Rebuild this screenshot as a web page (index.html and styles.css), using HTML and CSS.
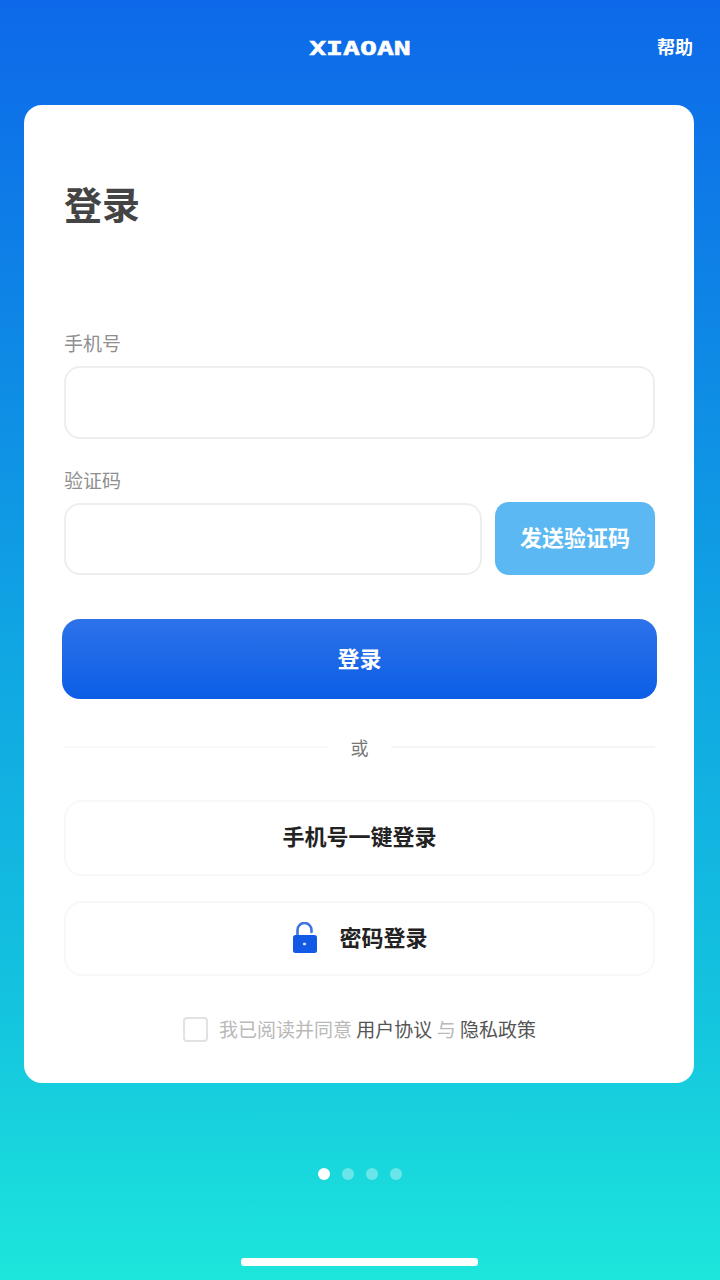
FILE: index.html
```html
<!DOCTYPE html>
<html lang="zh-CN">
<head>
<meta charset="utf-8">
<title>XIAOAN 登录</title>
<link rel="stylesheet" href="styles.css">
</head>
<body>
<div class="page">
  <header class="topbar">
    <span></span>
    <span class="logo">XIAOAN</span>
    <span class="help">帮助</span>
  </header>
  <main class="card">
    <h1 class="title">登录</h1>
    <div class="field">
      <label class="label">手机号</label>
      <div class="input"></div>
    </div>
    <div class="field field-code">
      <label class="label">验证码</label>
      <div class="code-row">
        <div class="input input-code"></div>
        <div class="send">发送验证码</div>
      </div>
    </div>
    <div class="submit">登录</div>
    <div class="divider"><span class="line line-left"></span><span class="or">或</span><span class="line"></span></div>
    <div class="alt">手机号一键登录</div>
    <div class="alt alt-pass">
      <svg class="lock" width="26" height="32" viewBox="0 0 26 32" aria-hidden="true">
        <path d="M5.5 15V8a7 7 0 0 1 14 0V10" fill="none" stroke="#3f74e2" stroke-width="2.6" stroke-linecap="round"/>
        <rect x="1" y="13" width="24" height="18" rx="2.5" fill="#1259e6"/>
        <rect x="10.8" y="20.7" width="3.4" height="2.6" rx="1.2" fill="#cfe0fb"/>
      </svg>
      <span>密码登录</span>
    </div>
    <div class="agree">
      <span class="check"></span>
      <span class="agree-text">我已阅读并同意 <b class="link">用户协议</b> 与 <b class="link">隐私政策</b></span>
    </div>
  </main>
  <div class="dots">
    <span class="dot dot-on"></span><span class="dot"></span><span class="dot"></span><span class="dot"></span>
  </div>
  <div class="home"></div>
</div>
</body>
</html>
```

FILE: styles.css
```css
* { box-sizing: border-box; }
html, body { margin: 0; padding: 0; }
body { font-family: "Noto Sans CJK SC", "Noto Sans", sans-serif; }
.page {
  width: 720px;
  height: 1280px;
  overflow: hidden;
  display: flex;
  flex-direction: column;
  background: linear-gradient(180deg, #0d69e9 0%, #0e86e6 25%, #10a5e3 50%, #14c5de 80%, #1de6dc 100%);
}
.topbar {
  height: 105px;
  flex: none;
  display: grid;
  grid-template-columns: 1fr auto 1fr;
  align-items: center;
  padding: 0 0 10px 0;
  color: #fff;
}
.logo {
  font-family: "DejaVu Sans Mono", monospace;
  font-weight: 700;
  font-size: 19px;
  line-height: 24px;
  display: block;
  width: 70px;
  text-align: center;
  -webkit-text-stroke: 0.5px #fff;
  transform: scaleX(1.48);
}
.help {
  justify-self: end;
  margin: -4px 27px 0 0;
  font-size: 18px;
  font-weight: 700;
  line-height: 24px;
}
.card {
  flex: none;
  width: 670px;
  height: 978px;
  margin-left: 24px;
  padding: 73px 39px 0 40px;
  background: #fff;
  border-radius: 18px;
}
.title {
  margin: 0;
  font-size: 38px;
  line-height: 50px;
  font-weight: 700;
  color: #444;
}
.field { margin-top: 102px; }
.field-code { margin-top: 28px; }
.label {
  display: block;
  font-size: 19px;
  line-height: 26px;
  color: #8f8f8f;
  margin-bottom: 10px;
}
.input {
  height: 73px;
  border: 2px solid #eeeeee;
  border-radius: 16px;
  background: #fff;
}
.code-row { display: flex; gap: 13px; }
.input-code { flex: 1; height: 72px; }
.send {
  width: 160px;
  height: 73px;
  margin-top: -1px;
  padding-bottom: 6px;
  border-radius: 14px;
  background: #5cb8f2;
  color: #fff;
  font-size: 22px;
  font-weight: 700;
  display: flex;
  align-items: center;
  justify-content: center;
}
.submit {
  margin: 44px -2px 0;
  height: 80px;
  padding-bottom: 4px;
  border-radius: 18px;
  background: linear-gradient(180deg, #2d72ea 0%, #0c5ee6 100%);
  color: #fff;
  font-size: 22px;
  font-weight: 700;
  display: flex;
  align-items: center;
  justify-content: center;
}
.divider {
  margin-top: 34px;
  height: 28px;
  display: flex;
  align-items: center;
  gap: 22px;
}
.line { flex: 1; height: 2px; background: #f5f5f5; }
.line-left { background: #f9f9f9; }
.or { font-size: 18px; line-height: 28px; color: #777; }
.alt {
  margin-top: 39px;
  height: 76px;
  padding-bottom: 6px;
  border: 2px solid #f8f8fa;
  border-radius: 18px;
  color: #222;
  font-size: 22px;
  font-weight: 700;
  display: flex;
  align-items: center;
  justify-content: center;
}
.alt-pass { margin-top: 25px; gap: 21px; height: 75px; padding-left: 1px; }
.lock { flex: none; margin-top: 5px; }
.agree {
  margin-top: 40px;
  display: flex;
  align-items: center;
  justify-content: center;
  gap: 11px;
}
.check {
  width: 25px;
  height: 25px;
  border: 2px solid #e2e2e2;
  border-radius: 4px;
  background: #fff;
}
.agree-text { font-size: 19px; line-height: 26px; color: #b9b9b9; }
.link { font-weight: 400; color: #555; }
.dots {
  flex: none;
  margin-top: 85px;
  height: 12px;
  display: flex;
  justify-content: center;
  gap: 12px;
}
.dot {
  width: 12px;
  height: 12px;
  border-radius: 50%;
  background: rgba(255, 255, 255, 0.35);
}
.dot-on { background: #fff; }
.home {
  flex: none;
  width: 237px;
  height: 8px;
  margin: 78px 0 0 241px;
  border-radius: 3px;
  background: #fff;
}
```
